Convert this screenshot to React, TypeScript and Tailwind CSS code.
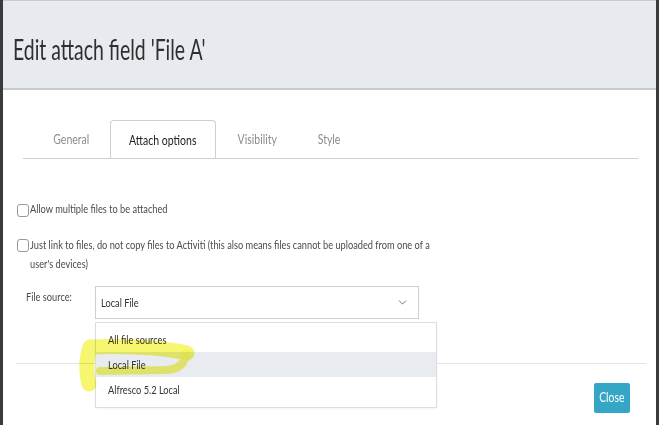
import { ChevronDown } from "lucide-react";

// condensed-looking text: Lato squeezed horizontally like the screenshot
function Sq({
  children,
  className = "",
  center = false,
}: {
  children: React.ReactNode;
  className?: string;
  center?: boolean;
}) {
  return (
    <span className={`inline-block whitespace-nowrap ${center ? "origin-center" : "origin-left"} ${className}`}>
      {children}
    </span>
  );
}

const tabs = [
  { label: "General", w: "w-[77px]", active: false },
  { label: "Attach options", w: "w-[106px]", active: true },
  { label: "Visibility", w: "w-[82px]", active: false },
  { label: "Style", w: "w-[62px]", active: false },
];

function Checkbox() {
  return <span className="mt-[1px] h-[13px] w-[12px] shrink-0 rounded-[3px] border border-[#9a9a9a] bg-white" />;
}

export default function App() {
  return (
    <div className="relative flex h-[425px] w-[659px] bg-[#3b3b3b] pl-[3px] pr-[3px] font-['Lato',sans-serif]">
      <div className="flex flex-1 flex-col border-t border-[#c8ccd2] bg-white">
        {/* header */}
        <div className="flex h-[89px] items-center border-b-2 border-[#c6cbd1] bg-[#e7ebef] pl-[10px] pt-[7px]">
          <Sq className="scale-x-[0.67] text-[29px] leading-none text-[#2f2f2f]">Edit attach field 'File A'</Sq>
        </div>

        {/* body */}
        <div className="flex flex-col pl-[20px] pr-[18px] pt-[30px]">
          <div className="flex border-b border-[#cfcfcf] pl-[10px]">
            {tabs.map((t) => (
              <div
                key={t.label}
                className={`flex h-[38px] items-center justify-center pt-[2px] text-[13px] ${t.w} ${
                  t.active ? "-mb-px rounded-t-[4px] border border-b-0 border-[#cfcfcf] bg-white text-[#222]" : "text-[#8c8c8c]"
                }`}
              >
                <Sq center className="scale-x-[0.81]">
                  {t.label}
                </Sq>
              </div>
            ))}
          </div>
        </div>

        <div className="flex flex-col pl-[14px] pt-[44px] text-[11px] leading-[18px] text-[#4a4a4a]">
          <label className="flex items-start gap-[1px]">
            <Checkbox />
            <Sq className="-mt-[3px] scale-x-[0.84]">Allow multiple files to be attached</Sq>
          </label>
          <label className="mt-[20px] flex items-start gap-[1px]">
            <Checkbox />
            <Sq className="-mt-[3px] scale-x-[0.84] leading-[19px]">
              Just link to files, do not copy files to Activiti (this also means files cannot be uploaded from one of a
              <br />
              user's devices)
            </Sq>
          </label>

          <div className="mt-[13px] flex items-start">
            <span className="w-[78px] pl-[9px] pt-[2px]">
              <Sq className="scale-x-[0.84]">File source:</Sq>
            </span>
            <div className="relative">
              <div className="flex h-[33px] w-[324px] items-center justify-between border border-[#cfcfcf] bg-white pl-[5px] pr-[9px] text-[#333]">
                <Sq className="scale-x-[0.84]">Local File</Sq>
                <ChevronDown className="h-[13px] w-[13px] text-[#555]" strokeWidth={1.5} />
              </div>
              {/* open menu */}
              <div className="absolute left-0 top-[36px] z-10 w-[342px] border border-[#dedede] bg-white pb-[5px] pt-[4px] text-[#333] shadow-[0_1px_2px_rgba(0,0,0,0.05)]">
                <div className="flex h-[25px] items-center pl-[12px]">
                  <Sq className="scale-x-[0.84]">All file sources</Sq>
                </div>
                <div className="flex h-[25px] items-center bg-[#e8ebef] pl-[12px]">
                  <Sq className="scale-x-[0.84]">Local File</Sq>
                </div>
                <div className="flex h-[25px] items-center pl-[12px]">
                  <Sq className="scale-x-[0.84]">Alfresco 5.2 Local</Sq>
                </div>
              </div>
            </div>
          </div>
        </div>

        {/* footer */}
        <div className="ml-[13px] mr-[10px] mt-[44px] flex justify-end border-t border-[#e4e4e4] pt-[19px] pr-[16px]">
          <button className="flex h-[30px] w-[36px] items-center justify-center rounded-[2px] bg-[#36a6c6] text-[13px] text-white">
            <Sq center className="scale-x-[0.8]">
              Close
            </Sq>
          </button>
        </div>
      </div>

      {/* highlighter mark drawn over the screenshot */}
      <svg className="pointer-events-none absolute inset-0 z-20 mix-blend-multiply" width="659" height="425" viewBox="0 0 659 425">
        <path
          d="M187 353 Q150 345 90 347 Q84 366 89 384"
          fill="none"
          stroke="#f4f458"
          strokeWidth="15"
          strokeLinecap="round"
          strokeLinejoin="round"
          opacity="0.85"
        />
        <path
          d="M100 371 L166 370 Q185 369 186 353"
          fill="none"
          stroke="#f4f458"
          strokeWidth="8"
          strokeLinecap="round"
          opacity="0.85"
        />
      </svg>
    </div>
  );
}
